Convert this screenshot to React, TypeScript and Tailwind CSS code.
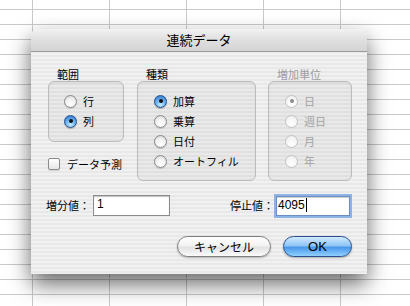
import React from "react";

const jp = "font-['Noto_Sans_CJK_JP',sans-serif]";

function Radio({ label, checked = false, disabled = false }: { label: string; checked?: boolean; disabled?: boolean }) {
  let circle =
    "border-[#8a8a8a] bg-[radial-gradient(circle_at_50%_75%,#ffffff_0%,#f2f2f2_50%,#cfcfcf_100%)] shadow-[0_1px_1px_rgba(0,0,0,0.15)]";
  if (checked && !disabled)
    circle =
      "border-[#23508e] bg-[radial-gradient(circle_at_50%_80%,#c6ecff_0%,#6cb4f2_45%,#2a6cc8_100%)] shadow-[0_1px_1px_rgba(0,0,0,0.25)]";
  if (disabled) circle = "border-[#c2c2c2] bg-[radial-gradient(circle_at_50%_75%,#ffffff,#eeeeee)]";
  return (
    <div className="flex items-center h-5 gap-[6px]">
      <span className={`w-[13px] h-[13px] rounded-full border flex items-center justify-center ${circle}`}>
        {checked && <span className={`w-[4px] h-[4px] rounded-full ${disabled ? "bg-[#8c8c8c]" : "bg-[#111]"}`} />}
      </span>
      <span className={`text-[11px] leading-none ${disabled ? "text-[#a3a3a3]" : "text-black"}`}>{label}</span>
    </div>
  );
}

function Group({ title, disabled = false, className, children }: { title: string; disabled?: boolean; className: string; children: React.ReactNode }) {
  return (
    <div className="flex flex-col">
      <div className={`h-[13px] leading-[13px] text-[11px] pl-[9px] ${disabled ? "text-[#9c9c9c]" : "text-black"}`}>{title}</div>
      <div
        className={`rounded-[6px] border border-[#bdbdbd] bg-black/[0.03] shadow-[inset_0_1px_2px_rgba(0,0,0,0.07)] pt-[9px] pl-[15px] ${className}`}
      >
        {children}
      </div>
    </div>
  );
}

export default function App() {
  return (
    <div
      className={`relative w-[410px] h-[306px] overflow-hidden bg-white bg-[linear-gradient(#c9c9c9_1px,transparent_1px),linear-gradient(90deg,#c9c9c9_1px,transparent_1px)] bg-size-[77px_15px] bg-position-[32px_9px] ${jp}`}
    >
      {/* sheet dialog */}
      <div className="absolute left-[31px] top-[29px] w-[336px] h-[245px] flex flex-col rounded-t-[7px] shadow-[0_10px_22px_rgba(0,0,0,0.6)] bg-[repeating-linear-gradient(to_bottom,#f1f1f1_0px,#f1f1f1_2px,#e8e8e8_2px,#e8e8e8_4px)]">
        <div className="h-[23px] rounded-t-[7px] border-b border-[#9a9a9a] bg-[linear-gradient(to_bottom,#f2f2f2,#e2e2e2_40%,#d4d4d4)] flex items-center justify-center text-[13px] text-black">
          連続データ
        </div>

        <div className="flex flex-col pt-[16px] pl-[17px] pr-[15px]">
          <div className="flex gap-[12px]">
            <div className="flex flex-col mr-px">
              <Group title="範囲" className="w-[76px] h-[61px]">
                <Radio label="行" />
                <Radio label="列" checked />
              </Group>
              <div className="flex items-center h-5 mt-[12px] gap-[7px]">
                <span className="w-[12px] h-[12px] rounded-[2px] border border-[#8a8a8a] bg-[linear-gradient(to_bottom,#ffffff,#e6e6e6)] shadow-[0_1px_1px_rgba(0,0,0,0.12)]" />
                <span className="text-[11px] text-black">データ予測</span>
              </div>
            </div>
            <Group title="種類" className="w-[119px] h-[100px] pl-[16px]">
              <Radio label="加算" checked />
              <Radio label="乗算" />
              <Radio label="日付" />
              <Radio label="オートフィル" />
            </Group>
            <Group title="増加単位" disabled className="w-[84px] h-[100px] pl-[16px]">
              <Radio label="日" checked disabled />
              <Radio label="週日" disabled />
              <Radio label="月" disabled />
              <Radio label="年" disabled />
            </Group>
          </div>

          <div className="flex items-center justify-between mt-[14px] h-[21px]">
            <div className="flex items-center ml-[-2px]">
              <span className="text-[11px] text-black w-[47px]">増分値：</span>
              <div className="w-[77px] h-[21px] border border-[#8c8c8c] bg-white shadow-[inset_0_1px_1px_rgba(0,0,0,0.25)] pl-[3px] pt-[1px] text-[12px] leading-[14px] font-['Liberation_Sans',sans-serif]">
                1
              </div>
            </div>
            <div className="flex items-center mr-[2px]">
              <span className="text-[11px] text-black w-[46px]">停止値：</span>
              <div className="w-[74px] h-[20px] border border-[#6d8fbf] bg-white shadow-[0_0_0_2px_rgba(110,160,225,0.75),inset_0_1px_1px_rgba(0,0,0,0.2)] pl-[1px] pt-[1px] text-[12px] leading-[14px] flex items-start font-['Liberation_Sans',sans-serif]">
                4095
                <span className="w-px h-[14px] bg-black ml-px" />
              </div>
            </div>
          </div>

          <div className="flex justify-end gap-[12px] mt-[20px]">
            <div className="w-[94px] h-[21px] rounded-full border border-[#7e7e7e] bg-[linear-gradient(to_bottom,#ffffff,#f2f2f2_45%,#e2e2e2_55%,#fbfbfb)] shadow-[0_1px_2px_rgba(0,0,0,0.25)] flex items-center justify-center text-[12px] text-black">
              キャンセル
            </div>
            <div className="w-[69px] h-[21px] rounded-full border border-[#2a4f8f] bg-[linear-gradient(to_bottom,#d2eafe,#8fc6f6_45%,#4b98ea_55%,#8fd0ff)] shadow-[0_1px_2px_rgba(0,0,0,0.3)] flex items-center justify-center text-[13px] text-black font-['Liberation_Sans',sans-serif]">
              OK
            </div>
          </div>
        </div>
      </div>
    </div>
  );
}
